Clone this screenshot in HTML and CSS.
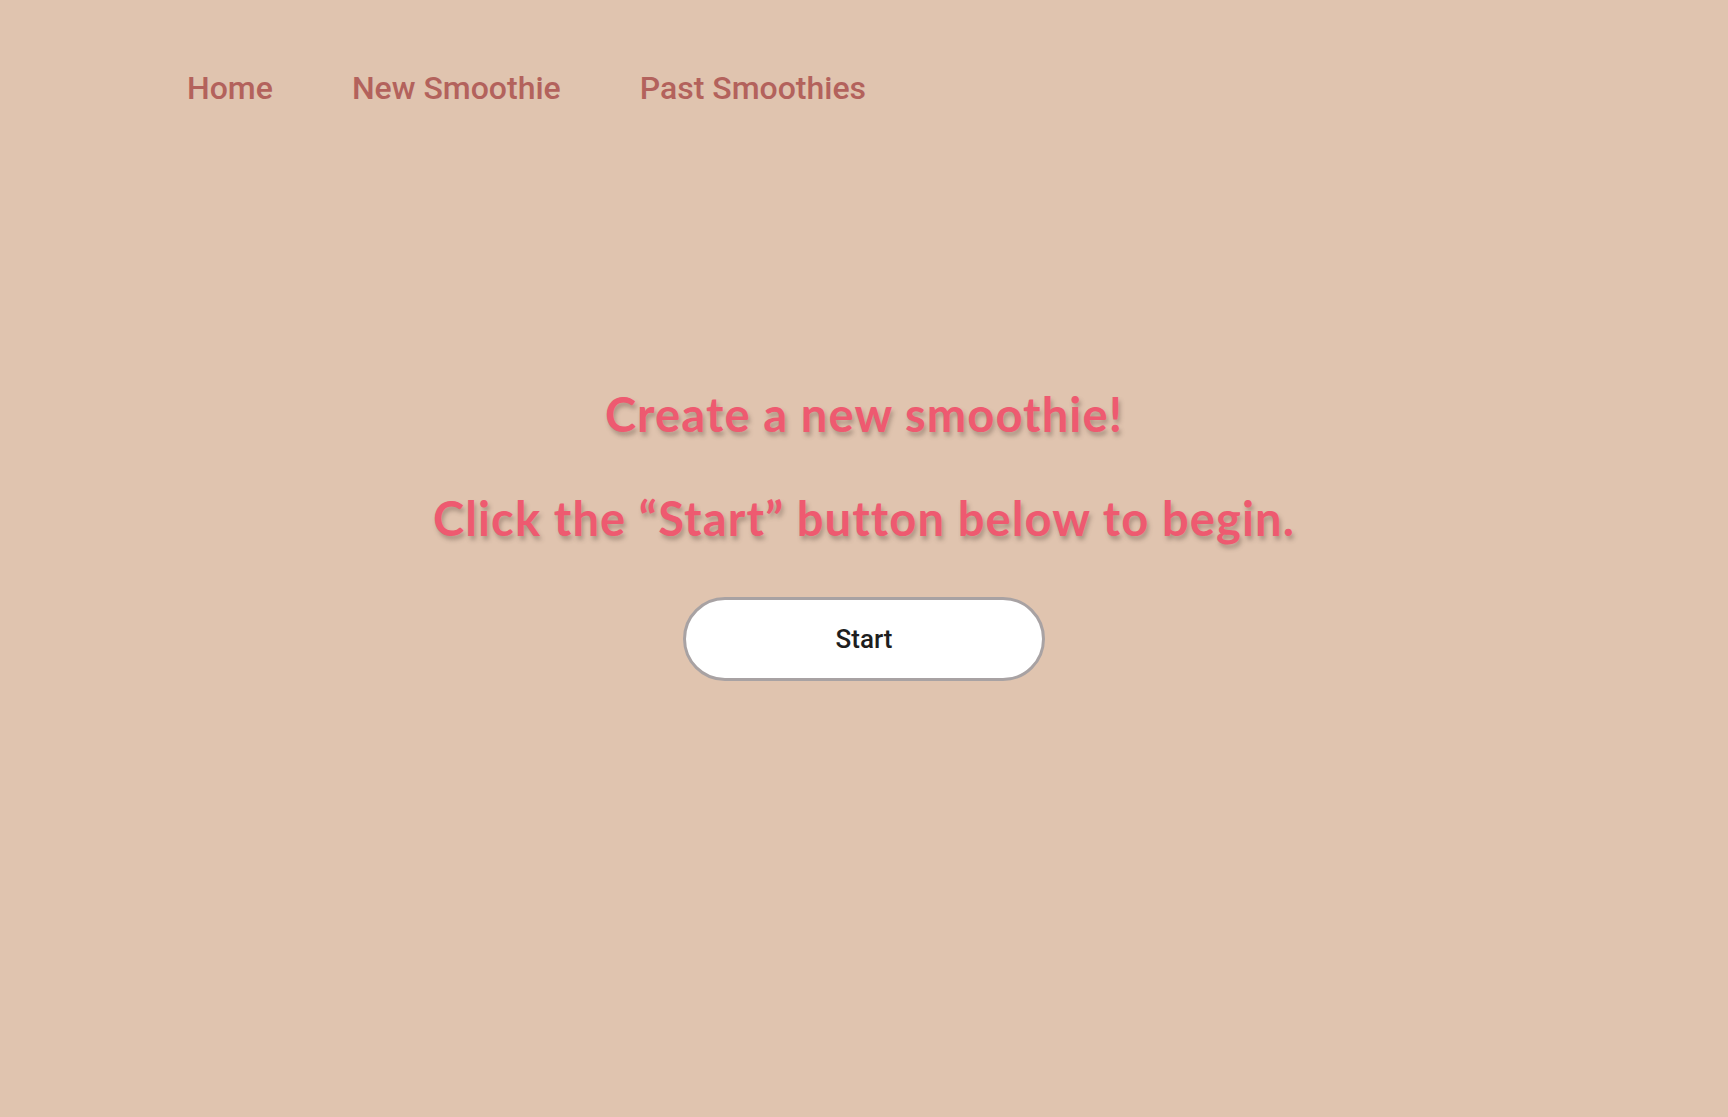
FILE: index.html
```html
<!DOCTYPE html>
<html lang="en">
<head>
<meta charset="utf-8">
<title>Smoothies</title>
<link rel="stylesheet" href="styles.css">
</head>
<body>
<nav class="nav">
  <a class="nav-link" href="#">Home</a>
  <a class="nav-link" href="#">New Smoothie</a>
  <a class="nav-link" href="#">Past Smoothies</a>
</nav>
<main class="main">
  <h1 class="title">Create a new smoothie!</h1>
  <h2 class="subtitle">Click the “Start” button below to begin.</h2>
  <button class="start-btn" type="button">Start</button>
</main>
</body>
</html>
```
FILE: styles.css
```css
html, body {
  margin: 0;
  padding: 0;
}
body {
  background: #e0c4af;
  min-height: 1117px;
  font-family: Roboto, "Liberation Sans", sans-serif;
}
.nav {
  display: flex;
  gap: 79px;
  padding: 68px 0 0 187px;
  height: 44px;
}
.nav-link {
  font-family: Roboto, sans-serif;
  font-weight: 500;
  font-size: 32px;
  line-height: 40px;
  color: #b3625c;
  text-decoration: none;
}
.main {
  display: flex;
  flex-direction: column;
  align-items: center;
  padding-top: 274px;
}
.title, .subtitle {
  margin: 0;
  font-family: Lato, sans-serif;
  font-weight: 700;
  font-size: 47px;
  line-height: 56px;
  color: #ee5a70;
  letter-spacing: 1.15px;
  text-shadow: 2px 4px 4px rgba(110, 90, 80, 0.45);
}
.subtitle {
  margin-top: 48px;
}
.start-btn {
  margin-top: 51px;
  width: 362px;
  height: 84px;
  border: 3px solid #a8a2a3;
  border-radius: 42px;
  background: #ffffff;
  font-family: Roboto, sans-serif;
  font-weight: 500;
  font-size: 26px;
  color: #1e1e1e;
  cursor: pointer;
}
```
